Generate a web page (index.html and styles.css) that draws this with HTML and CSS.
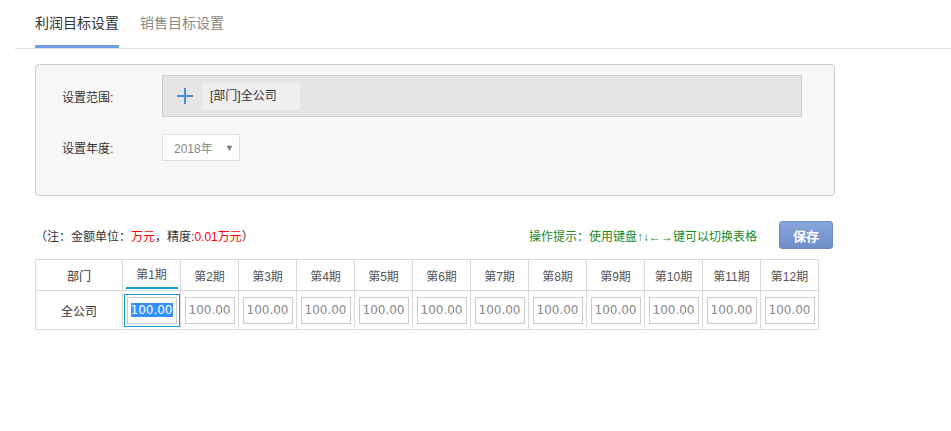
FILE: index.html
```html
<!DOCTYPE html>
<html lang="zh-CN">
<head>
  <meta charset="UTF-8">
  <title>目标设置</title>
  <link rel="stylesheet" href="styles.css">
</head>
<body>

  <div class="tabs">
    <a href="#" class="tab active">利润目标设置</a>
    <a href="#" class="tab">销售目标设置</a>
  </div>

  <div class="main">
    <div class="panel">
      <div class="field">
        <span class="label">设置范围:</span>
        <div class="range">
          <span class="plus"></span>
          <span class="chip">[部门]全公司</span>
        </div>
      </div>
      <div class="field year-field">
        <span class="label">设置年度:</span>
        <div class="select">
          <span>2018年</span>
          <span class="arrow">▼</span>
        </div>
      </div>
    </div>

    <div class="toolbar">
      <p class="note">（注：金额单位：<em>万元</em>，精度:<em>0.01万元</em>）</p>
      <p class="hint">操作提示：使用键盘↑↓←→键可以切换表格</p>
      <button class="btn-save">保存</button>
    </div>

    <table class="grid">
      <colgroup>
        <col class="dept-col">
        <col span="12">
      </colgroup>
      <tr>
        <th class="dept">部门</th>
        <th><span class="current">第1期</span></th>
        <th>第2期</th>
        <th>第3期</th>
        <th>第4期</th>
        <th>第5期</th>
        <th>第6期</th>
        <th>第7期</th>
        <th>第8期</th>
        <th>第9期</th>
        <th>第10期</th>
        <th>第11期</th>
        <th>第12期</th>
      </tr>
      <tr>
        <td class="dept">全公司</td>
        <td><div class="focus"><span class="cell"><span class="sel">100.00</span></span></div></td>
        <td><span class="cell">100.00</span></td>
        <td><span class="cell">100.00</span></td>
        <td><span class="cell">100.00</span></td>
        <td><span class="cell">100.00</span></td>
        <td><span class="cell">100.00</span></td>
        <td><span class="cell">100.00</span></td>
        <td><span class="cell">100.00</span></td>
        <td><span class="cell">100.00</span></td>
        <td><span class="cell">100.00</span></td>
        <td><span class="cell">100.00</span></td>
        <td><span class="cell">100.00</span></td>
      </tr>
    </table>
  </div>

</body>
</html>
```

FILE: styles.css
```css
* {
  margin: 0;
  padding: 0;
  box-sizing: border-box;
}

body {
  font-family: "Liberation Sans", "Noto Sans CJK SC", sans-serif;
  font-size: 12px;
  color: #333;
  background: #fff;
}

.tabs {
  display: flex;
  gap: 21px;
  margin-left: 15px;
  padding-left: 20px;
  border-bottom: 1px solid #ddd;
  height: 49px;
}

.tab {
  display: block;
  font-size: 14px;
  line-height: 46px;
  color: #888;
  text-decoration: none;
  border-bottom: 3px solid transparent;
}

.tab.active {
  color: #333;
  border-bottom-color: #6f9fe3;
}

.main {
  margin-left: 35px;
}

.panel {
  margin-top: 15px;
  width: 800px;
  height: 132px;
  background: #f7f7f7;
  border: 1px solid #ccc;
  border-radius: 4px;
  padding: 10px 0 0 26px;
}

.field {
  display: flex;
  align-items: center;
}

.label {
  width: 100px;
}

.range {
  display: flex;
  align-items: center;
  width: 640px;
  height: 42px;
  background: #e5e5e5;
  border: 1px solid #ccc;
  padding-left: 14px;
}

.plus {
  position: relative;
  width: 16px;
  height: 16px;
  margin-right: 9px;
}

.plus::before,
.plus::after {
  content: '';
  position: absolute;
  background: #4a8fe0;
}

.plus::before {
  left: 0;
  top: 7px;
  width: 16px;
  height: 2px;
}

.plus::after {
  left: 7px;
  top: 0;
  width: 2px;
  height: 16px;
}

.chip {
  display: block;
  width: 98px;
  height: 27px;
  line-height: 27px;
  padding-left: 8px;
  background: #efefef;
  border-radius: 2px;
}

.year-field {
  margin-top: 17px;
}

.select {
  display: flex;
  align-items: center;
  justify-content: space-between;
  width: 78px;
  height: 27px;
  padding: 0 5px 0 11px;
  background: #fff;
  border: 1px solid #ddd;
  color: #888;
}

.arrow {
  font-size: 9px;
  color: #777;
}

.toolbar {
  display: flex;
  align-items: center;
  width: 798px;
  margin-top: 25px;
}

.note {
  flex: 1;
}

.note em {
  font-style: normal;
  color: #f00;
}

.hint {
  color: #1d8a1d;
  margin-right: 22px;
}

.btn-save {
  width: 54px;
  height: 28px;
  font-family: inherit;
  font-size: 13px;
  font-weight: bold;
  color: #fff;
  background: linear-gradient(#87a5dc, #6e8ec9);
  border: 1px solid #6d8cc7;
  border-radius: 3px;
}

.grid {
  margin-top: 10px;
  width: 782px;
  table-layout: fixed;
  border-collapse: collapse;
  text-align: center;
}

.grid col {
  width: 58px;
}

.grid .dept-col {
  width: 87px;
}

.grid th,
.grid td {
  border: 1px solid #d9d9d9;
  padding: 0;
}

.grid th {
  height: 31px;
  font-weight: normal;
  color: #555;
}

.grid td {
  height: 39px;
}

.grid .dept {
  color: #333;
}

.current {
  display: inline-block;
  width: 52px;
  line-height: 24px;
  margin-top: 2px;
  border-bottom: 2px solid #1a9bd0;
}

.cell {
  display: inline-block;
  width: 50px;
  height: 27px;
  line-height: 25px;
  border: 1px solid #ccc;
  font-family: "DejaVu Sans", sans-serif;
  font-size: 12px;
  color: #888;
  background: #fff;
  vertical-align: middle;
}

.focus {
  display: inline-block;
  padding: 2px;
  border: 1px solid #1a9bd0;
  line-height: 0;
}

.sel {
  background: #3390ff;
  color: #fff;
}
```
